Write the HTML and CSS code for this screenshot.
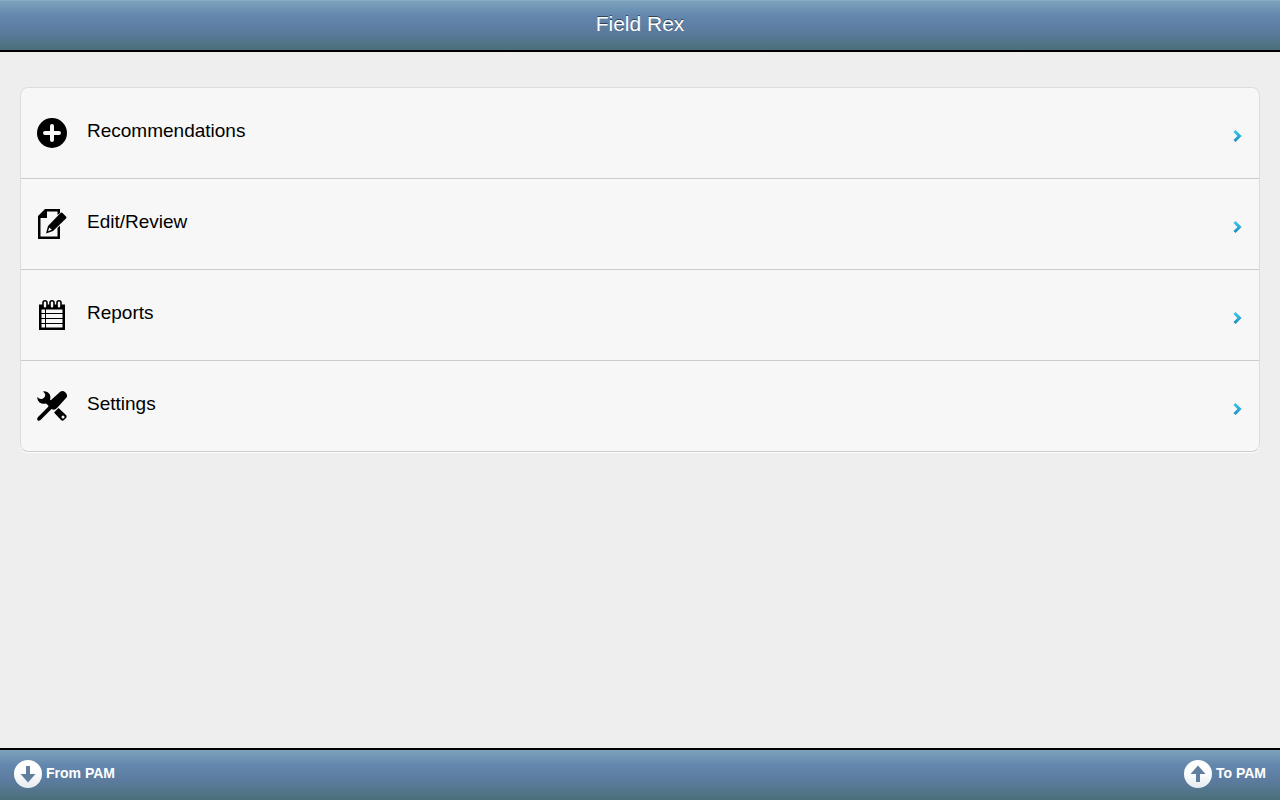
FILE: index.html
```html
<!DOCTYPE html>
<html lang="en">
<head>
<meta charset="utf-8">
<meta name="viewport" content="width=device-width, initial-scale=1">
<title>Field Rex</title>
<link rel="stylesheet" href="styles.css">
</head>
<body>
<header class="titlebar"><h1 class="title">Field Rex</h1></header>
<main class="content">
  <ul class="menu">
    <li class="menu-item"><a class="menu-link" href="#recommendations">
      <svg class="icon" viewBox="0 0 30 30" aria-hidden="true"><circle cx="15" cy="15" r="15"/><path d="M15 8V22M8 15H22" fill="none" stroke="#f7f7f7" stroke-width="4" stroke-linecap="round"/></svg>
      <span class="label">Recommendations</span>
      <svg class="chevron" viewBox="0 0 10 14" aria-hidden="true"><defs><linearGradient id="cyan" x1="0" y1="0" x2="0" y2="1"><stop offset="0" stop-color="#35c8ee"/><stop offset="1" stop-color="#1d8fc0"/></linearGradient></defs><path d="M1.500 2L6.500 7L1.500 12" fill="none" stroke="url(#cyan)" stroke-width="3"/></svg>
    </a></li>
    <li class="menu-item"><a class="menu-link" href="#edit">
      <svg class="icon" viewBox="0 0 30 30" aria-hidden="true"><path fill-rule="evenodd" d="M8 0H23V4L20.500 6V2.500H10V9H3.500V27.500H20.500V19L23 16.500V30H1V7Z"/><path fill-rule="evenodd" d="M23.500 4Q24.500 3 25.500 4L29 7.500Q30 8.500 29 9.500L16 22L9 24.500L11 17ZM12.300 18.500L11 22.300L14.800 20.800Z"/></svg>
      <span class="label">Edit/Review</span>
      <svg class="chevron" viewBox="0 0 10 14" aria-hidden="true"><path d="M1.500 2L6.500 7L1.500 12" fill="none" stroke="url(#cyan)" stroke-width="3"/></svg>
    </a></li>
    <li class="menu-item"><a class="menu-link" href="#reports">
      <svg class="icon" viewBox="0 0 30 30" aria-hidden="true"><path fill-rule="evenodd" d="M2 4.500H28V30H2ZM4.500 9.500V27.500H25.500V9.500Z"/><path d="M8.500 8V28M4 13.500H26M4 18.500H26M4 23.500H26" fill="none" stroke="#000" stroke-width="1"/><g fill="#f7f7f7" stroke="#000" stroke-width="1.600"><rect x="6" y="0.800" width="4" height="7.500" rx="2"/><rect x="13" y="0.800" width="4" height="7.500" rx="2"/><rect x="20" y="0.800" width="4" height="7.500" rx="2"/></g></svg>
      <span class="label">Reports</span>
      <svg class="chevron" viewBox="0 0 10 14" aria-hidden="true"><path d="M1.500 2L6.500 7L1.500 12" fill="none" stroke="url(#cyan)" stroke-width="3"/></svg>
    </a></li>
    <li class="menu-item"><a class="menu-link" href="#settings">
      <svg class="icon" viewBox="0 0 30 30" aria-hidden="true"><path d="M6 .5Q10 -.5 12.500 3Q14 6 13 8.500L14.500 10L10.500 14L9 12.500Q5.500 13.500 2.500 11.500Q0 9.500 .3 6Q3 9 6 7.500Q9 5.500 8 3Q7.500 1.500 6 .5Z"/><path d="M23.500 .5Q26 -.8 28.500 1.500Q31 4 29.500 6.500L20 17Q17.500 20 14.500 18L6 26.500L3.500 29Q2 30.500 .7 29.300Q-.5 28 1 26L11.500 15.500Q10 12.500 13 10Z"/><path fill-rule="evenodd" d="M21.500 17L29 24Q30.300 25.500 29 27L27 29Q25.500 30.300 24 29L17 21.500ZM26 24.500A1.500 1.500 0 1 0 26 27.500A1.500 1.500 0 1 0 26 24.500Z"/></svg>
      <span class="label">Settings</span>
      <svg class="chevron" viewBox="0 0 10 14" aria-hidden="true"><path d="M1.500 2L6.500 7L1.500 12" fill="none" stroke="url(#cyan)" stroke-width="3"/></svg>
    </a></li>
  </ul>
</main>
<footer class="toolbar">
  <button class="tool" type="button"><svg class="tool-icon" viewBox="0 0 28 28" aria-hidden="true"><defs><linearGradient id="disc" x1="0" y1="0" x2="0" y2="1"><stop offset=".4" stop-color="#fff"/><stop offset="1" stop-color="#e4ebf0"/></linearGradient></defs><circle cx="14" cy="14" r="14" fill="url(#disc)"/><path d="M12 6H16V14H21.500L14 22.500L6.500 14H12Z" fill="#607f9f"/></svg><span class="tool-label">From PAM</span></button>
  <button class="tool" type="button"><svg class="tool-icon" viewBox="0 0 28 28" aria-hidden="true"><circle cx="14" cy="14" r="14" fill="url(#disc)"/><path d="M12 22H16V14H21.500L14 5.500L6.500 14H12Z" fill="#607f9f"/></svg><span class="tool-label">To PAM</span></button>
</footer>
</body>
</html>
```
FILE: styles.css
```css
* {
  box-sizing: border-box;
}

body {
  display: flex;
  flex-direction: column;
  min-height: 100vh;
  margin: 0;
  background: #eee;
  color: #000;
  font-family: "Liberation Sans", Arial, sans-serif;
}

.titlebar,
.toolbar {
  display: flex;
  align-items: center;
  background: linear-gradient(#7ba3bc 0%, #6387ad 30%, #5c7c9f 60%, #4a6f7a 100%);
  color: #fff;
}

.titlebar {
  justify-content: center;
  padding: 11px 16px 14px;
  border-top: 1px solid #86adc4;
  border-bottom: 2px solid #000;
}

.title {
  margin: 0;
  font-size: 21px;
  font-weight: 400;
  line-height: 24px;
  text-shadow: 0 -1px 0 rgba(0, 0, 0, 0.5);
}

.content {
  flex: 1;
  padding: 35px 20px;
}

.menu {
  margin: 0;
  padding: 0;
  overflow: hidden;
  list-style: none;
  background: #f7f7f7;
  border: 1px solid #dcdcdc;
  border-bottom-color: #cbcbcb;
  border-radius: 8px;
  box-shadow: 0 1px 1px #fff;
}

.menu-item + .menu-item {
  border-top: 1px solid #cbcbcb;
}

.menu-link {
  display: flex;
  align-items: center;
  padding: 30px 16px;
  color: inherit;
  text-decoration: none;
}

.icon {
  width: 30px;
  height: 30px;
  flex: none;
}

.label {
  flex: 1;
  padding: 0 20px 4px;
  font-size: 19px;
  line-height: 24px;
}

.chevron {
  width: 10px;
  height: 14px;
  flex: none;
  margin-top: 6px;
}

.toolbar {
  justify-content: space-between;
  padding: 10px 14px 12px;
  border-top: 2px solid #000;
}

.tool {
  display: flex;
  align-items: center;
  gap: 4px;
  padding: 0;
  border: 0;
  background: none;
  color: #fff;
  font: bold 14px/20px "Liberation Sans", Arial, sans-serif;
}

.tool-label {
  padding-bottom: 2px;
}

.tool-icon {
  width: 28px;
  height: 28px;
}
```
